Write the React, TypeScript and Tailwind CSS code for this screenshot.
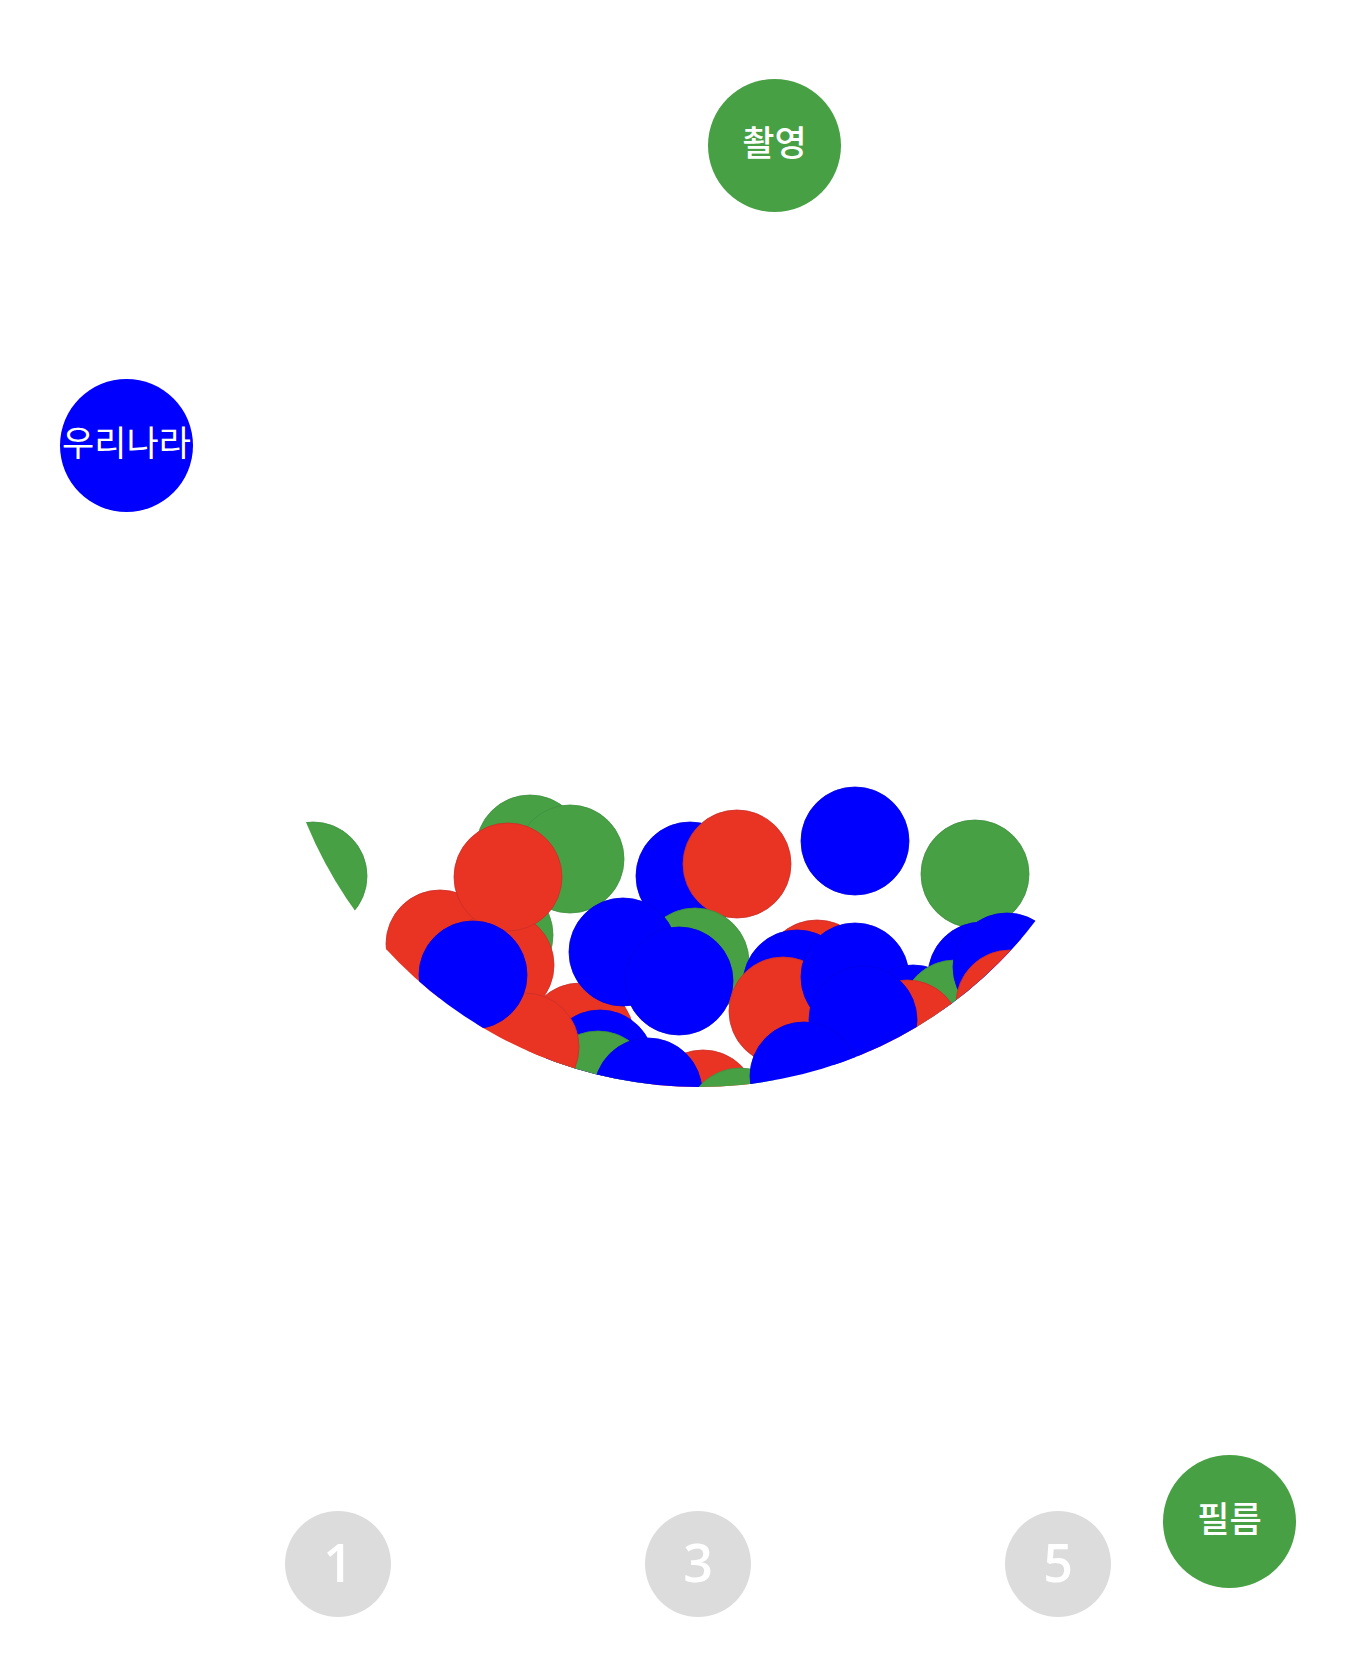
import React from "react";

type Ball = [string, number, number];

const FILL: Record<string, string> = {
  g: "#48a044",
  r: "#e93424",
  b: "#0000ff",
};
const STROKE: Record<string, string> = {
  g: "#3f9140",
  r: "#c9302a",
  b: "#0000e6",
};

const balls: Ball[] = [
  ["g", 313, 876],
  ["g", 530, 849],
  ["g", 570, 859],
  ["g", 499, 935],
  ["r", 440, 944],
  ["r", 500, 965],
  ["r", 508, 877],
  ["r", 580, 1037],
  ["b", 600, 1064],
  ["g", 598, 1085],
  ["r", 525, 1047],
  ["b", 473, 975],
  ["b", 690, 876],
  ["r", 737, 864],
  ["b", 855, 841],
  ["g", 975, 874],
  ["g", 695, 962],
  ["b", 623, 952],
  ["b", 679, 981],
  ["r", 703, 1104],
  ["b", 648, 1092],
  ["g", 740, 1122],
  ["r", 817, 974],
  ["b", 797, 984],
  ["r", 783, 1011],
  ["b", 855, 977],
  ["b", 913, 1019],
  ["b", 982, 976],
  ["g", 955, 1014],
  ["r", 907, 1034],
  ["b", 863, 1020],
  ["b", 804, 1076],
  ["b", 1007, 967],
  ["r", 1010, 1004],
];

function BallPile() {
  return (
    <svg
      className="pointer-events-none absolute left-0 top-0"
      width={1356}
      height={1668}
      viewBox="0 0 1356 1668"
    >
      <defs>
        <clipPath id="bowl">
          <circle cx={699} cy={663} r={424} />
        </clipPath>
      </defs>
      <g clipPath="url(#bowl)">
        {balls.map(([c, x, y], i) => (
          <circle
            key={i}
            cx={x}
            cy={y}
            r={54}
            fill={FILL[c]}
            stroke={STROKE[c]}
            strokeWidth={0.8}
          />
        ))}
      </g>
    </svg>
  );
}

export default function App() {
  return (
    <div className="relative flex h-[1668px] w-full flex-col justify-end overflow-hidden bg-white pb-[51px]">
      <BallPile />

      <div className="absolute left-[708px] top-[79px] flex h-[133px] w-[133px] items-center justify-center rounded-full bg-[#48a044] pb-[9px] font-['Noto_Sans_CJK_KR','Noto_Sans',sans-serif] text-[35px] font-medium text-white">
        촬영
      </div>

      <div className="absolute left-[60px] top-[379px] flex h-[133px] w-[133px] items-center justify-center whitespace-nowrap rounded-full bg-[#0000ff] pb-[8px] font-['Noto_Sans_CJK_KR','Noto_Sans',sans-serif] text-[35px] font-normal text-white">
        우리나라
      </div>

      <div className="relative flex flex-row gap-[254px] pl-[285px]">
        <div className="flex h-[106px] w-[106px] items-center justify-center rounded-full bg-[#dcdcdc] pb-[4px] font-['Open_Sans',sans-serif] text-[52px] font-semibold text-white">
          1
        </div>
        <div className="flex h-[106px] w-[106px] items-center justify-center rounded-full bg-[#dcdcdc] pb-[4px] font-['Open_Sans',sans-serif] text-[52px] font-semibold text-white">
          3
        </div>
        <div className="flex h-[106px] w-[106px] items-center justify-center rounded-full bg-[#dcdcdc] pb-[4px] font-['Open_Sans',sans-serif] text-[52px] font-semibold text-white">
          5
        </div>
      </div>

      <div className="absolute left-[1163px] top-[1455px] flex h-[133px] w-[133px] items-center justify-center rounded-full bg-[#48a044] pb-[9px] font-['Noto_Sans_CJK_KR','Noto_Sans',sans-serif] text-[35px] font-medium text-white">
        필름
      </div>
    </div>
  );
}
